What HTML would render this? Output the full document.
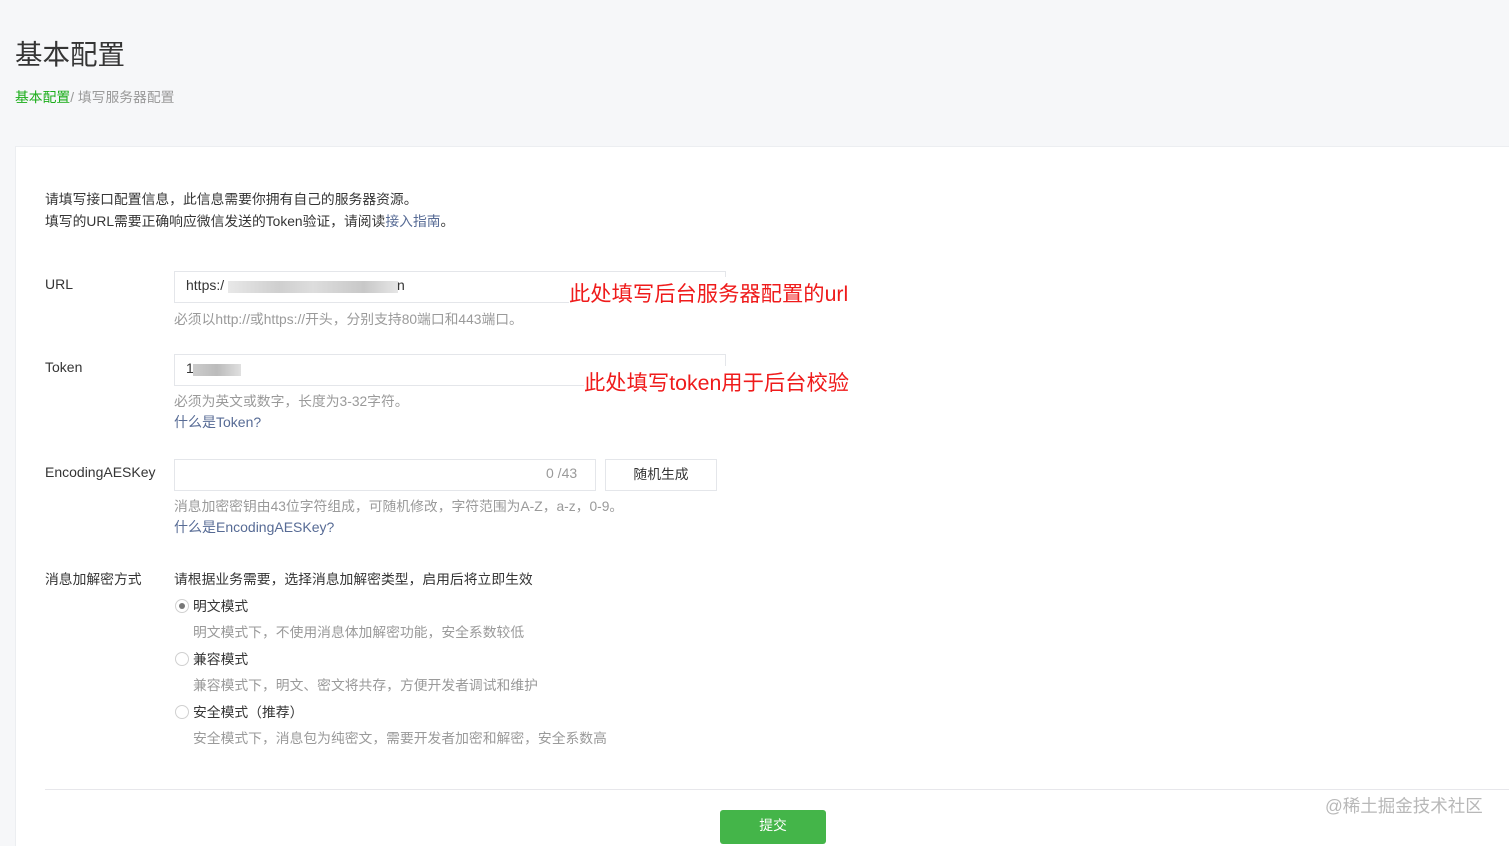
<!DOCTYPE html>
<html><head><meta charset="utf-8"><style>
*{margin:0;padding:0;box-sizing:border-box}
body{width:1509px;height:839px;overflow:hidden;background:#f6f7f9;font-family:"Liberation Sans","Noto Sans CJK SC",sans-serif;color:#353535;position:relative;font-size:14px}
.a{position:absolute;white-space:nowrap}
.card{position:absolute;left:15px;top:146px;width:1494px;height:700px;background:#fff;border-top:1px solid #eceef1;border-left:1px solid #eceef1}
.inp{position:absolute;border:1px solid #e4e6ea;background:#fff;height:32px}
.g{color:#9a9a9a;font-size:13.8px}
.l{color:#576b95;font-size:14px}
.red{color:#ef1b1b;font-size:21.3px}
.r{position:absolute;width:14px;height:14px;border:1px solid #d0d0d0;border-radius:50%;background:#fff}
</style></head><body>
<div class="a" style="left:15px;top:32px;font-size:27.5px;color:#353535">基本配置</div>
<div class="a" style="left:15px;top:86px;font-size:13.8px;color:#9a9a9a"><span style="color:#1aad19">基本配置</span>/ 填写服务器配置</div>
<div class="card"></div>
<div class="a" style="left:45px;top:188px;font-size:13.8px">请填写接口配置信息，此信息需要你拥有自己的服务器资源。</div>
<div class="a" style="left:45px;top:210px;font-size:13.8px">填写的URL需要正确响应微信发送的Token验证，请阅读<span style="color:#576b95">接入指南</span>。</div>

<div class="a" style="left:45px;top:276px">URL</div>
<div class="inp" style="left:174px;top:271px;width:552px"></div>
<div class="a" style="left:186px;top:277px">https:/</div>
<div class="a" style="left:228px;top:281px;width:170px;height:12px;background:linear-gradient(90deg,#e8e8e8,#cfcfcf 30%,#ddd 50%,#c8c8c8 80%,#e6e6e6)"></div>
<div class="a" style="left:397px;top:277px">n</div>
<div class="a red" style="left:569px;top:277px;background:#fff">此处填写后台服务器配置的url</div>
<div class="a g" style="left:174px;top:308px">必须以http://或https://开头，分别支持80端口和443端口。</div>

<div class="a" style="left:45px;top:359px">Token</div>
<div class="inp" style="left:174px;top:354px;width:552px"></div>
<div class="a" style="left:186px;top:360px">1</div>
<div class="a" style="left:193px;top:364px;width:48px;height:12px;background:linear-gradient(90deg,#ccc,#bbb 50%,#e0e0e0)"></div>
<div class="a red" style="left:584px;top:366px;background:#fff">此处填写token用于后台校验</div>
<div class="a g" style="left:174px;top:390px">必须为英文或数字，长度为3-32字符。</div>
<div class="a l" style="left:174px;top:412px">什么是Token?</div>

<div class="a" style="left:45px;top:464px">EncodingAESKey</div>
<div class="inp" style="left:174px;top:459px;width:422px"></div>
<div class="a g" style="left:546px;top:465px;font-size:14px">0 /43</div>
<div class="inp" style="left:605px;top:459px;width:112px;text-align:center;line-height:30px;font-size:13.8px">随机生成</div>
<div class="a g" style="left:174px;top:495px">消息加密密钥由43位字符组成，可随机修改，字符范围为A-Z，a-z，0-9。</div>
<div class="a l" style="left:174px;top:517px">什么是EncodingAESKey?</div>

<div class="a" style="left:45px;top:568px;font-size:13.8px">消息加解密方式</div>
<div class="a" style="left:174px;top:568px;font-size:13.8px">请根据业务需要，选择消息加解密类型，启用后将立即生效</div>
<div class="r" style="left:175px;top:599px"><div style="position:absolute;left:3px;top:3px;width:6px;height:6px;border-radius:50%;background:#777"></div></div>
<div class="a" style="left:193px;top:595px;font-size:13.8px">明文模式</div>
<div class="a g" style="left:193px;top:621px">明文模式下，不使用消息体加解密功能，安全系数较低</div>
<div class="r" style="left:175px;top:652px"></div>
<div class="a" style="left:193px;top:648px;font-size:13.8px">兼容模式</div>
<div class="a g" style="left:193px;top:674px">兼容模式下，明文、密文将共存，方便开发者调试和维护</div>
<div class="r" style="left:175px;top:705px"></div>
<div class="a" style="left:193px;top:701px;font-size:13.8px">安全模式（推荐）</div>
<div class="a g" style="left:193px;top:727px">安全模式下，消息包为纯密文，需要开发者加密和解密，安全系数高</div>

<div class="a" style="left:45px;top:789px;width:1464px;height:1px;background:#e7e7eb"></div>
<div class="a" style="left:720px;top:810px;width:106px;height:34px;background:#44b549;border-radius:3px;color:#fff;text-align:center;line-height:32px;font-size:13.8px">提交</div>
<div class="a" style="left:1325px;top:793px;font-size:17.5px;color:#b8b8b8">@稀土掘金技术社区</div>
</body></html>
